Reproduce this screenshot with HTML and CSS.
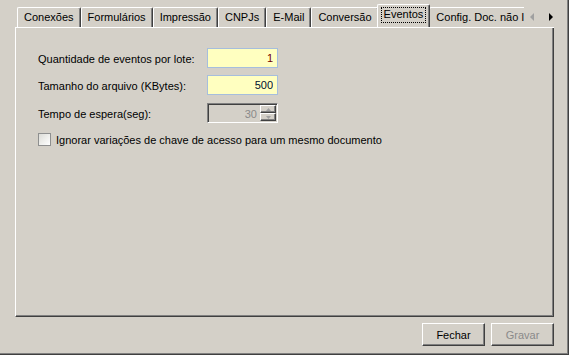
FILE: index.html
```html
<!DOCTYPE html>
<html lang="pt-BR">

<head>
    <meta charset="UTF-8">
    <title>Configurações - Eventos</title>
    <link rel="stylesheet" href="styles.css">
</head>

<body>
    <div class="janela">
        <div class="abas-linha">
            <ul class="abas">
                <li class="aba">Conexões</li>
                <li class="aba">Formulários</li>
                <li class="aba">Impressão</li>
                <li class="aba">CNPJs</li>
                <li class="aba">E-Mail</li>
                <li class="aba">Conversão</li>
                <li class="aba ativa"><span class="foco">Eventos</span></li>
                <li class="aba ultima">Config. Doc. não I</li>
            </ul>
            <div class="setas">
                <svg width="6" height="8" viewBox="0 0 6 8"><path d="M5 0 L1 4 L5 8 Z" fill="#a0a0a0"/></svg>
                <svg width="6" height="8" viewBox="0 0 6 8"><path d="M1 0 L5 4 L1 8 Z" fill="#000"/></svg>
            </div>
        </div>

        <div class="painel">
            <div class="campos">
                <label for="qtdEventos">Quantidade de eventos por lote:</label>
                <input id="qtdEventos" class="caixa" type="text" value="1">

                <label for="tamArquivo">Tamanho do arquivo (KBytes):</label>
                <input id="tamArquivo" class="caixa azul" type="text" value="500">

                <label class="desab">Tempo de espera(seg):</label>
                <div class="spin">
                    <span class="spin-valor">30</span>
                    <div class="spin-botoes">
                        <span class="spin-btn"><svg width="5" height="3" viewBox="0 0 5 3"><path d="M2.5 0 L5 3 L0 3 Z" fill="#a0a0a0"/></svg></span>
                        <span class="spin-btn"><svg width="5" height="3" viewBox="0 0 5 3"><path d="M0 0 L5 0 L2.5 3 Z" fill="#a0a0a0"/></svg></span>
                    </div>
                </div>
            </div>

            <label class="checagem">
                <span class="quadrado"></span>
                Ignorar variações de chave de acesso para um mesmo documento
            </label>
        </div>

        <div class="rodape">
            <button>Fechar</button>
            <button disabled>Gravar</button>
        </div>
    </div>
</body>

</html>
```

FILE: styles.css
```css
body {
    margin: 0;
    background-color: #d4d0c8;
    font-family: "Liberation Sans", Arial, sans-serif;
    font-size: 11px;
    color: #000;
}

.janela {
    width: 569px;
    height: 355px;
    box-sizing: border-box;
    background-color: #d4d0c8;
    padding: 4px 14px 0 15px;
    border-right: 1px solid #404040;
    border-bottom: 1px solid #404040;
    box-shadow: inset -1px -1px 0 #808080;
    display: flex;
    flex-direction: column;
}

.abas-linha {
    display: flex;
    height: 23px;
    position: relative;
    z-index: 1;
}

.abas {
    list-style: none;
    margin: 0;
    padding: 0 0 0 2px;
    width: 507px;
    overflow: hidden;
    display: flex;
    align-items: flex-end;
    white-space: nowrap;
}

.aba {
    flex: none;
    box-sizing: border-box;
    height: 20px;
    padding: 3px 6px 0 6px;
    border-top: 1px solid #fff;
    border-left: 1px solid #fff;
    border-right: 1px solid #404040;
    box-shadow: inset -1px 0 0 #808080;
    border-radius: 2px 2px 0 0;
}

.aba.ativa {
    height: 24px;
    margin: 0 -1px -1px -2px;
    padding: 3px 4px 0 4px;
    background-color: #d4d0c8;
    position: relative;
}

.aba.ultima {
    border-right: none;
    box-shadow: none;
}

.foco {
    display: inline-block;
    padding: 0 2px 1px 2px;
    outline: 1px dotted #000;
    line-height: 13px;
}

.setas {
    flex: 1;
    display: flex;
    align-items: center;
    gap: 13px;
    padding: 3px 0 0 5px;
    border-bottom: 1px solid #fff;
    margin-bottom: -1px;
}

.painel {
    box-sizing: border-box;
    height: 290px;
    border-top: 1px solid #fff;
    border-left: 1px solid #fff;
    border-right: 1px solid #404040;
    border-bottom: 1px solid #404040;
    box-shadow: inset -1px -1px 0 #808080;
    padding: 20px 0 0 22px;
}

.campos {
    display: grid;
    grid-template-columns: 169px 71px;
    row-gap: 7px;
    align-items: center;
}

.campos label {
    padding-top: 2px;
}

.caixa {
    box-sizing: border-box;
    width: 71px;
    height: 20px;
    margin: 0;
    padding: 0 4px 0 2px;
    border: 1px solid #a6bedd;
    background-color: #ffffc0;
    font-family: inherit;
    font-size: 11px;
    text-align: right;
    color: #700000;
}

.caixa.azul {
    color: #001030;
}

.spin {
    box-sizing: border-box;
    width: 71px;
    height: 20px;
    margin-top: 1px;
    border-top: 1px solid #808080;
    border-left: 1px solid #808080;
    border-right: 1px solid #fff;
    border-bottom: 1px solid #fff;
    box-shadow: inset 1px 1px 0 #404040;
    display: flex;
    justify-content: flex-end;
    align-items: center;
    padding: 1px 1px 1px 2px;
}

.spin-valor {
    color: #8a8a8a;
    padding: 1px 3px 0 0;
}

.spin-botoes {
    display: flex;
    flex-direction: column;
    width: 16px;
    height: 16px;
}

.spin-btn {
    flex: 1;
    box-sizing: border-box;
    display: flex;
    align-items: center;
    justify-content: center;
    border-top: 1px solid #fff;
    border-left: 1px solid #fff;
    border-right: 1px solid #404040;
    border-bottom: 1px solid #404040;
    box-shadow: inset -1px -1px 0 #808080;
}

.checagem {
    display: flex;
    align-items: center;
    gap: 5px;
    margin-top: 10px;
}

.quadrado {
    box-sizing: border-box;
    width: 13px;
    height: 13px;
    border: 1px solid #8e8f8f;
    background: linear-gradient(135deg, #dcdcd7, #fff);
}

.rodape {
    display: flex;
    justify-content: flex-end;
    gap: 6px;
    padding-top: 6px;
}

button {
    box-sizing: border-box;
    width: 63px;
    height: 23px;
    padding: 0;
    background-color: #d4d0c8;
    border-top: 1px solid #fff;
    border-left: 1px solid #fff;
    border-right: 1px solid #404040;
    border-bottom: 1px solid #404040;
    box-shadow: inset -1px -1px 0 #808080;
    font-family: inherit;
    font-size: 11px;
    color: #000;
}

button:disabled {
    color: #8a8a8a;
}
```
